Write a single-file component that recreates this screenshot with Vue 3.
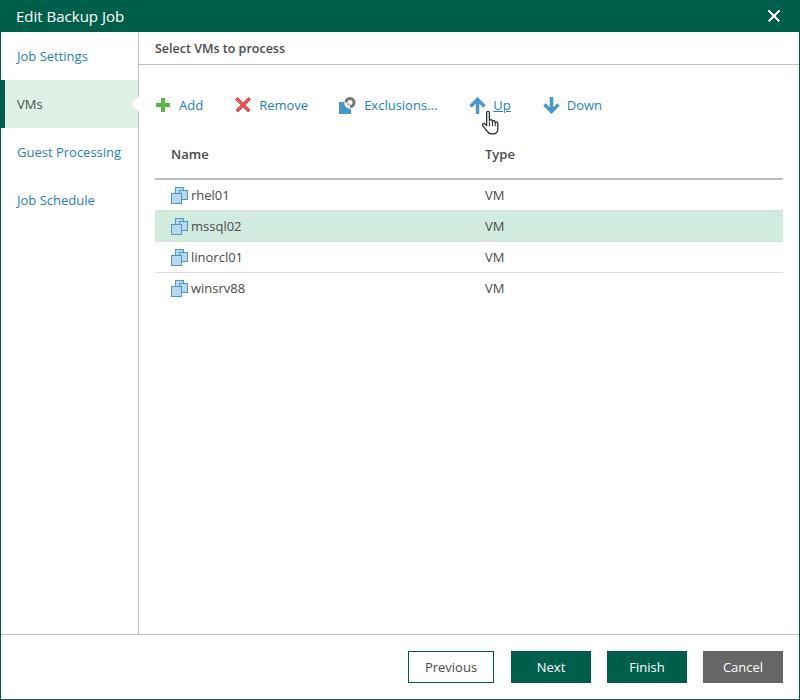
<template>
  <div class="dialog">
    <header class="titlebar">
      <span>Edit Backup Job</span>
      <svg class="close" width="14" height="14" viewBox="0 0 14 14" shape-rendering="crispEdges">
        <path d="M1.500 1.500L12.500 12.500M12.500 1.500L1.500 12.500" stroke="#fff" stroke-width="2" fill="none" />
      </svg>
    </header>
    <div class="body">
      <nav class="sidebar">
        <a
          v-for="item in steps"
          :key="item"
          class="step"
          :class="{ active: item === 'VMs' }"
        >{{ item }}</a>
      </nav>
      <main class="content">
        <div class="heading">Select VMs to process</div>
        <div class="toolbar">
          <a class="tool tool-add">
            <svg width="14" height="14" viewBox="0 0 14 14"><path d="M5 0h4v5h5v4H9v5H5V9H0V5h5z" fill="#5ab54b" /></svg>
            <span>Add</span>
          </a>
          <a class="tool tool-remove">
            <svg width="16" height="16" viewBox="0 0 16 16" shape-rendering="crispEdges"><path d="M1.500 1.500L14.500 14.500M14.500 1.500L1.500 14.500" stroke="#e95454" stroke-width="3.800" fill="none" /></svg>
            <span>Remove</span>
          </a>
          <a class="tool tool-excl">
            <svg width="17" height="17" viewBox="0 0 17 17">
              <path d="M0 5h5a7 7 0 0 0 7 7v5H0z" fill="#4a98cb" />
              <path d="M5.500 5.500a5.500 5.500 0 1 1 5.500 5.500V8a2.500 2.500 0 1 0-2.500-2.500z" fill="#777" />
              <path d="M7.500 6.500h3v3z" fill="#999" />
            </svg>
            <span>Exclusions...</span>
          </a>
          <a class="tool tool-up">
            <svg width="17" height="17" viewBox="0 0 17 17"><path d="M8.500 17V3M1.500 9.500L8.500 2.500L15.500 9.500" stroke="#4a98cb" stroke-width="3.500" fill="none" /></svg>
            <span class="hovered">Up</span>
            <svg class="cursor" width="20" height="26" viewBox="0 0 18 24">
              <path d="M5 2.500c0-1.800 2.500-1.800 2.500 0V10c.3-1.500 2.500-1.500 2.700 0v.7c.3-1.300 2.500-1.300 2.600.2v.8c.4-1.100 2.500-.9 2.500.6v4.700c0 2.800-1.700 5-4.500 5H9.300c-1.800 0-2.800-.8-3.800-2.200L1.400 14.500c-1-1.500.8-2.800 2-1.700L5 14.500z" fill="#fff" stroke="#1e2228" stroke-width="1.100" stroke-linejoin="round" />
              <path d="M7.600 11v4M10.300 11v4M12.900 12v3" stroke="#1e2228" stroke-width="0.900" fill="none" />
            </svg>
          </a>
          <a class="tool tool-down">
            <svg width="17" height="17" viewBox="0 0 17 17"><path d="M8.500 0V14M1.500 7.500L8.500 14.500L15.500 7.500" stroke="#4a98cb" stroke-width="3.500" fill="none" /></svg>
            <span>Down</span>
          </a>
        </div>
        <div class="table">
          <div class="table-head">
            <div class="col-name">Name</div>
            <div class="col-type">Type</div>
          </div>
          <div
            v-for="vm in vms"
            :key="vm"
            class="row"
            :class="{ selected: vm === 'mssql02' }"
          >
            <div class="col-name vm-name">
              <svg width="17" height="17" viewBox="0 0 17 17">
                <rect x="4.500" y="0.500" width="8" height="7" fill="#bcd7ec" stroke="#4a98cb" />
                <rect x="8.500" y="3.500" width="8" height="9" fill="#bcd7ec" stroke="#4a98cb" />
                <rect x="0.500" y="6.500" width="10" height="10" fill="#bcd7ec" stroke="#4a98cb" />
              </svg>
              <span>{{ vm }}</span>
            </div>
            <div class="col-type">VM</div>
          </div>
        </div>
      </main>
    </div>
    <footer class="footer">
      <button class="btn btn-outline">Previous</button>
      <button class="btn btn-primary btn-next">Next</button>
      <button class="btn btn-primary">Finish</button>
      <button class="btn btn-grey">Cancel</button>
    </footer>
  </div>
</template>

<script setup>
const steps = ['Job Settings', 'VMs', 'Guest Processing', 'Job Schedule']
const vms = ['rhel01', 'mssql02', 'linorcl01', 'winsrv88']
</script>

<style>
body {
  margin: 0;
  background: #fff;
}
</style>

<style scoped>
.dialog {
  box-sizing: border-box;
  width: 800px;
  height: 700px;
  display: flex;
  flex-direction: column;
  border: 1px solid #005f4b;
  border-top: 0;
  background: #fff;
  font-family: "Open Sans", sans-serif;
  font-size: 13px;
  color: #4a4a4a;
}

.titlebar {
  flex: none;
  height: 32px;
  margin: 0 -1px;
  padding: 0 19px 0 16px;
  display: flex;
  justify-content: space-between;
  align-items: center;
  background: #005f4b;
  color: #fff;
  font-size: 15px;
}

.body {
  flex: 1;
  display: flex;
  min-height: 0;
}

.sidebar {
  flex: none;
  box-sizing: border-box;
  width: 138px;
  border-right: 1px solid #bfbfbf;
}

.step {
  box-sizing: border-box;
  display: flex;
  align-items: center;
  position: relative;
  height: 48px;
  padding-left: 16px;
  color: #1e81b8;
}

.step.active {
  background: #dff0e6;
  box-shadow: inset 4px 0 0 #005f4b;
  color: #4a4a4a;
}

/* notch pointing at the content pane */
.step.active::after {
  content: "";
  position: absolute;
  right: -1px;
  top: 16px;
  width: 8px;
  height: 16px;
  background: #fff;
  clip-path: polygon(100% 0, 0 50%, 100% 100%);
}

.content {
  flex: 1;
  min-width: 0;
  display: flex;
  flex-direction: column;
}

.heading {
  box-sizing: border-box;
  height: 33px;
  padding: 8px 16px 0;
  border-bottom: 1px solid #bfbfbf;
  font-weight: 600;
  font-size: 12.500px;
}

.toolbar {
  box-sizing: border-box;
  height: 82px;
  padding: 0 0 2px 17px;
  display: flex;
  align-items: center;
}

.tool {
  display: flex;
  align-items: center;
  position: relative;
  color: #1e81b8;
}

.tool-add { gap: 9px; margin-right: 32px; }
.tool-remove { gap: 8px; margin-right: 31px; }
.tool-excl { gap: 8px; margin-right: 32px; }
.tool-up { gap: 7px; margin-right: 32px; }
.tool-down { gap: 7px; }

.hovered {
  text-decoration: underline;
}

.cursor {
  position: absolute;
  left: 12px;
  top: 14px;
}

.table {
  margin: -7px 16px 0;
}

.table-head {
  box-sizing: border-box;
  height: 40px;
  padding-top: 5px;
  display: flex;
  border-bottom: 2px solid #bfbfbf;
  font-weight: 600;
  font-size: 13px;
}

.col-name {
  box-sizing: border-box;
  width: 330px;
  padding-left: 16px;
}

.col-type {
  flex: 1;
}

.row {
  box-sizing: border-box;
  height: 31px;
  display: flex;
  align-items: center;
  border-bottom: 1px solid #dcdcdc;
}

.row:last-child {
  border-bottom-color: transparent;
}

.row.selected {
  background: #d2ebdf;
}

.vm-name {
  display: flex;
  align-items: center;
  gap: 3px;
}

.footer {
  flex: none;
  box-sizing: border-box;
  height: 65px;
  padding: 16px 16px 0 0;
  display: flex;
  justify-content: flex-end;
  gap: 16px;
  border-top: 1px solid #bfbfbf;
}

.btn {
  box-sizing: border-box;
  width: 80px;
  height: 32px;
  padding: 0;
  border: 0;
  font-family: inherit;
  font-size: 13px;
  color: #fff;
}

.btn-outline {
  width: 86px;
  background: #fff;
  border: 1px solid #005f4b;
  color: #4a4a4a;
}

.btn-next {
  margin-left: 1px;
}

.btn-primary {
  background: #005f4b;
}

.btn-grey {
  background: #666;
}
</style>
